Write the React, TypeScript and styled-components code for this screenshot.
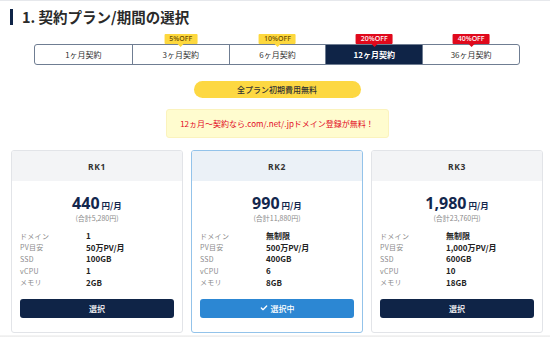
import React from "react";
import styled, { createGlobalStyle } from "styled-components";

const Global = createGlobalStyle`
  html, body { margin: 0; padding: 0; background: #fff; }
  body { font-family: "Noto Sans CJK JP", "Noto Sans", sans-serif; color: #222; }
  * { box-sizing: border-box; }
`;

const Page = styled.div`
  width: 550px;
  height: 337px;
  border-top: 1px solid #e6e8ec;
  overflow: hidden;
  display: flex;
  flex-direction: column;
  padding: 0 7px 0 11px;
`;

const Heading = styled.h1`
  margin: 7px 0 0 -1px;
  display: flex;
  align-items: center;
  gap: 9px;
  font-size: 14.5px;
  line-height: 17px;
  font-weight: 700;
  color: #2a2a2a;
  &::before {
    content: "";
    display: block;
    width: 3px;
    height: 16px;
    background: #0f2447;
  }
`;

const Tabs = styled.div`
  margin: 19px 23px 0 23px;
  display: grid;
  grid-template-columns: repeat(5, 1fr);
  border: 1px solid #6f7d92;
  border-radius: 3px;
  height: 21px;
`;

const Tab = styled.div<{ $active?: boolean }>`
  position: relative;
  display: flex;
  align-items: center;
  justify-content: center;
  font-size: 8px;
  font-weight: ${(p) => (p.$active ? 700 : 400)};
  color: ${(p) => (p.$active ? "#fff" : "#333")};
  background: ${(p) => (p.$active ? "#0f2447" : "transparent")};
  & + & { border-left: 1px solid #6f7d92; }
`;

const Badge = styled.span<{ $red?: boolean }>`
  position: absolute;
  top: -11px;
  left: 50%;
  transform: translateX(-50%);
  height: 10px;
  padding: 0 5px;
  border-radius: 1px;
  font-family: "Noto Sans", sans-serif;
  font-size: 7px;
  line-height: 10px;
  font-weight: 500;
  white-space: nowrap;
  color: ${(p) => (p.$red ? "#fff" : "#6a4b00")};
  background: ${(p) => (p.$red ? "#e0091c" : "#fdd83e")};
  &::after {
    content: "";
    position: absolute;
    left: 50%;
    bottom: -3px;
    transform: translateX(-50%);
    border-left: 3px solid transparent;
    border-right: 3px solid transparent;
    border-top: 3px solid ${(p) => (p.$red ? "#e0091c" : "#fdd83e")};
  }
`;

const Pill = styled.div`
  align-self: center;
  margin: 16px 0 0 0;
  width: 167px;
  height: 17px;
  border-radius: 9px;
  background: #fdd842;
  display: flex;
  align-items: center;
  justify-content: center;
  font-size: 8px;
  font-weight: 500;
  color: #333;
`;

const Notice = styled.div`
  align-self: center;
  margin-top: 11px;
  width: 223px;
  height: 29px;
  border-radius: 3px;
  background: #fffccf;
  border: 1px solid #fbf3bd;
  display: flex;
  align-items: center;
  justify-content: center;
  font-size: 8px;
  color: #e2091e;
`;

const Cards = styled.div`
  margin-top: 12px;
  display: grid;
  grid-template-columns: repeat(3, 1fr);
  gap: 8px;
`;

const Card = styled.div<{ $sel?: boolean }>`
  height: 183px;
  border: 1px solid ${(p) => (p.$sel ? "#93c3ea" : "#e2e4e8")};
  border-radius: 3px;
  overflow: hidden;
  display: flex;
  flex-direction: column;
  background: #fff;
`;

const CardHead = styled.div<{ $sel?: boolean }>`
  height: 30px;
  display: flex;
  align-items: center;
  justify-content: center;
  background: ${(p) => (p.$sel ? "#ebf1f7" : "#f3f4f6")};
  font-family: "Noto Sans", sans-serif;
  font-size: 8.5px;
  font-weight: 700;
  letter-spacing: 0.6px;
  color: #333;
`;

const Price = styled.div`
  margin-top: 12px;
  text-align: center;
  color: #13274d;
  font-weight: 700;
  line-height: 18px;
`;

const Amount = styled.span`
  font-family: "Noto Sans", sans-serif;
  font-size: 16px;
`;

const Unit = styled.span`
  font-size: 8.5px;
  margin-left: 2px;
`;

const Total = styled.div`
  text-align: center;
  font-size: 7px;
  color: #8a8a8a;
  line-height: 9px;
`;

const Specs = styled.dl`
  margin: 7px 0 0 0;
  padding: 0 8px;
  display: grid;
  grid-template-columns: 66px 1fr;
  grid-auto-rows: 11.6px;
  align-items: center;
`;

const Label = styled.dt`
  font-size: 7px;
  letter-spacing: 0.3px;
  color: #8a8a8a;
`;

const Value = styled.dd`
  margin: 0;
  font-size: 8px;
  font-weight: 700;
  color: #222;
`;

const Button = styled.button<{ $sel?: boolean }>`
  margin: 11px 8px 0 8px;
  height: 19px;
  border: none;
  border-radius: 3px;
  background: ${(p) => (p.$sel ? "#2c87d3" : "#0f2447")};
  color: #fff;
  font-family: "Noto Sans CJK JP", sans-serif;
  font-size: 8px;
  font-weight: 500;
  display: flex;
  align-items: center;
  justify-content: center;
  gap: 3px;
  padding: 0;
`;

const Footer = styled.div`
  margin: 2px -7px 0 -11px;
  flex: 1;
  background: linear-gradient(#f5f5f5, #ececec);
`;

const tabs = [
  { label: "1ヶ月契約" },
  { label: "3ヶ月契約", badge: "5%OFF" },
  { label: "6ヶ月契約", badge: "10%OFF" },
  { label: "12ヶ月契約", badge: "20%OFF", red: true, active: true },
  { label: "36ヶ月契約", badge: "40%OFF", red: true },
];

const plans = [
  { name: "RK1", price: "440", total: "(合計5,280円)", specs: ["1", "50万PV/月", "100GB", "1", "2GB"] },
  { name: "RK2", price: "990", total: "(合計11,880円)", specs: ["無制限", "500万PV/月", "400GB", "6", "8GB"], sel: true },
  { name: "RK3", price: "1,980", total: "(合計23,760円)", specs: ["無制限", "1,000万PV/月", "600GB", "10", "18GB"] },
];

const labels = ["ドメイン", "PV目安", "SSD", "vCPU", "メモリ"];

export default function App() {
  return (
    <>
      <Global />
      <Page>
        <Heading>1. 契約プラン/期間の選択</Heading>
        <Tabs>
          {tabs.map((t) => (
            <Tab key={t.label} $active={t.active}>
              {t.badge && <Badge $red={t.red}>{t.badge}</Badge>}
              {t.label}
            </Tab>
          ))}
        </Tabs>
        <Pill>全プラン初期費用無料</Pill>
        <Notice>12ヵ月〜契約なら.com/.net/.jpドメイン登録が無料！</Notice>
        <Cards>
          {plans.map((p) => (
            <Card key={p.name} $sel={p.sel}>
              <CardHead $sel={p.sel}>{p.name}</CardHead>
              <Price>
                <Amount>{p.price}</Amount>
                <Unit>円/月</Unit>
              </Price>
              <Total>{p.total}</Total>
              <Specs>
                {labels.map((l, i) => (
                  <React.Fragment key={l}>
                    <Label>{l}</Label>
                    <Value>{p.specs[i]}</Value>
                  </React.Fragment>
                ))}
              </Specs>
              <Button $sel={p.sel}>
                {p.sel && (
                  <svg width="8" height="8" viewBox="0 0 24 24" fill="none" stroke="#fff" strokeWidth="4" strokeLinecap="round" strokeLinejoin="round">
                    <path d="M4 12l5 5L20 6" />
                  </svg>
                )}
                {p.sel ? "選択中" : "選択"}
              </Button>
            </Card>
          ))}
        </Cards>
        <Footer />
      </Page>
    </>
  );
}
